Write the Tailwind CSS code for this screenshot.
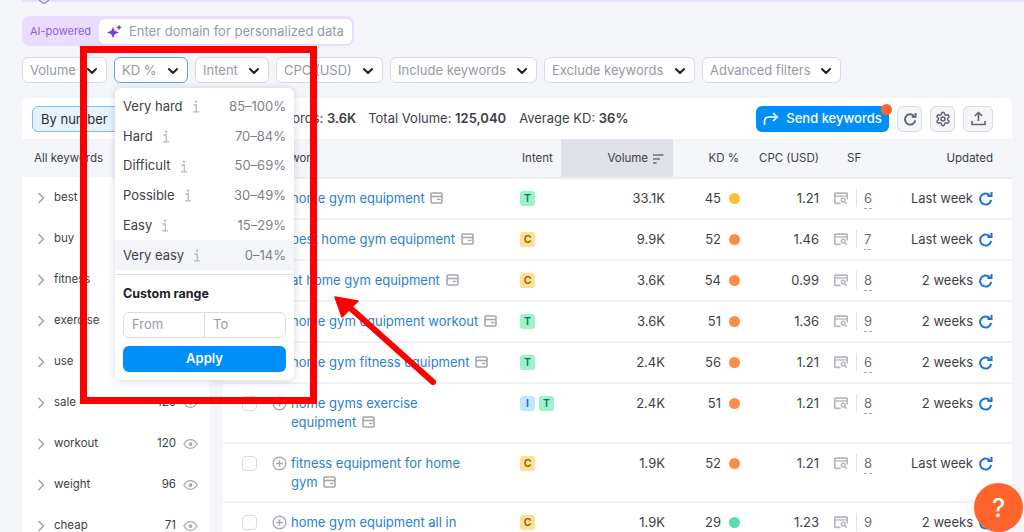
<!DOCTYPE html>
<html lang="en">
  <head>
    <meta charset="UTF-8" />
    <meta name="viewport" content="width=device-width, initial-scale=1.0" />
    <title>Keyword Magic Tool</title>
    <script src="https://cdn.jsdelivr.net/npm/@tailwindcss/browser@4"></script>
  </head>
  <body class="relative h-[532px] w-[1024px] overflow-hidden bg-[#f4f5f9] font-[Inter,sans-serif] text-[13px] text-[#3d3f47]">
    <!-- shared icons -->
    <svg class="hidden">
      <symbol id="chev" viewBox="0 0 12 12"><path d="M2 4l4 4 4-4" fill="none" stroke="currentColor" stroke-width="2" stroke-linecap="round" stroke-linejoin="round" /></symbol>
      <symbol id="chev-r" viewBox="0 0 8 12"><path d="M2 1.5L6.5 6 2 10.5" fill="none" stroke="currentColor" stroke-width="1.7" stroke-linecap="round" stroke-linejoin="round" /></symbol>
      <symbol id="eye" viewBox="0 0 16 12"><path d="M1 6c1.8-3 4-4.6 7-4.6S13.200 3 15 6c-1.800 3-4 4.600-7 4.600S2.800 9 1 6z" fill="none" stroke="currentColor" stroke-width="1.300" /><circle cx="8" cy="6" r="2" fill="currentColor" /></symbol>
      <symbol id="plus" viewBox="0 0 16 16"><circle cx="8" cy="8" r="6.800" fill="none" stroke="currentColor" stroke-width="1.400" /><path d="M8 4.500v7M4.500 8h7" stroke="currentColor" stroke-width="1.500" /></symbol>
      <symbol id="card" viewBox="0 0 13 12"><rect x="1" y="1" width="11" height="10" rx="1" fill="none" stroke="currentColor" stroke-width="1.600" /><path d="M1 4.500h11" stroke="currentColor" stroke-width="1.600" /><path d="M7 7.500h3.500" stroke="currentColor" stroke-width="1.400" /></symbol>
      <symbol id="serp" viewBox="0 0 15 13"><path d="M7 11.800H1.500a.7.7 0 0 1-.7-.7V1.500a.7.7 0 0 1 .7-.7h12a.7.7 0 0 1 .7.7v6" fill="none" stroke="currentColor" stroke-width="1.800" /><path d="M1 3.800h13" stroke="currentColor" stroke-width="1.500" /><circle cx="9.800" cy="8.200" r="2" fill="none" stroke="currentColor" stroke-width="1.500" /><path d="M11.300 9.800l2.200 2.200" stroke="currentColor" stroke-width="1.600" /></symbol>
      <symbol id="refresh" viewBox="0 0 16 16"><path d="M12.300 4.300A5.900 5.900 0 1 0 14 9.500" fill="none" stroke="currentColor" stroke-width="2.200" /><path d="M14.400 1v4.400H10" fill="none" stroke="currentColor" stroke-width="2.200" /></symbol>
      <symbol id="info" viewBox="0 0 9 13"><circle cx="5" cy="1.600" r="1.200" fill="currentColor" /><path d="M2.500 5H5.300V11.500M2 11.800H8" fill="none" stroke="currentColor" stroke-width="1.300" /></symbol>
    </svg>

    <!-- top strip -->
    <div class="ml-[22px] h-[2px] bg-[#eadffb]"></div>
    <svg class="absolute left-[38px] top-0 h-[4px] w-[12px]" viewBox="0 0 12 4" fill="none" stroke="#8d909b" stroke-width="1.200"><path d="M1 0l4 3.200 2 0L11 0" /></svg>

    <!-- AI domain field -->
    <div class="ml-[22px] mt-[14px] flex h-[30px] w-[332px] items-start rounded-lg bg-[#e9dcfd] pl-[8px] pr-[2px] pt-[3px]">
      <span class="flex h-[25px] w-[69px] items-center text-[11px] text-[#8f5ceb]">AI-powered</span>
      <div class="flex h-[25px] flex-1 items-center rounded-md bg-white pl-[8px]">
        <svg class="h-[15px] w-[15px] text-[#7c3fe4]" viewBox="0 0 15 15" fill="currentColor"><path d="M6 3L7.800 6.800 12 8.500 7.800 10.200 6 14 4.200 10.200 0 8.500 4.200 6.800z" /><path d="M12 .5l.9 2.100 2.100.9-2.100.9-.9 2.100-.9-2.100-2.100-.9 2.100-.9z" /></svg>
        <span class="ml-[7px] text-[13px] text-[#9599a6]">Enter domain for personalized data</span>
      </div>
    </div>

    <!-- filters -->
    <div class="ml-[22px] mt-[11px] flex h-[26px] gap-[7px] text-[13px] text-[#9599a6]">
      <div class="flex w-[85px] items-center justify-between rounded-md border border-[#d9dbe3] bg-white pl-[7px] pr-[8px] pt-[2px]">Volume<svg class="h-[12px] w-[12px] text-[#1f2127]"><use href="#chev" /></svg></div>
      <div class="flex w-[74px] items-center justify-between rounded-md border border-[#5ba4e6] bg-white pl-[7px] pr-[8px] pt-[2px]">KD %<svg class="h-[12px] w-[12px] text-[#1f2127]"><use href="#chev" /></svg></div>
      <div class="flex w-[74px] items-center justify-between rounded-md border border-[#d9dbe3] bg-white pl-[7px] pr-[8px] pt-[2px]">Intent<svg class="h-[12px] w-[12px] text-[#1f2127]"><use href="#chev" /></svg></div>
      <div class="flex w-[107px] items-center justify-between rounded-md border border-[#d9dbe3] bg-white pl-[7px] pr-[8px] pt-[2px]">CPC (USD)<svg class="h-[12px] w-[12px] text-[#1f2127]"><use href="#chev" /></svg></div>
      <div class="flex w-[147px] items-center justify-between rounded-md border border-[#d9dbe3] bg-white pl-[7px] pr-[8px] pt-[2px]">Include keywords<svg class="h-[12px] w-[12px] text-[#1f2127]"><use href="#chev" /></svg></div>
      <div class="flex w-[151px] items-center justify-between rounded-md border border-[#d9dbe3] bg-white pl-[7px] pr-[8px] pt-[2px]">Exclude keywords<svg class="h-[12px] w-[12px] text-[#1f2127]"><use href="#chev" /></svg></div>
      <div class="flex w-[139px] items-center justify-between rounded-md border border-[#d9dbe3] bg-white pl-[7px] pr-[8px] pt-[2px]">Advanced filters<svg class="h-[12px] w-[12px] text-[#1f2127]"><use href="#chev" /></svg></div>
    </div>

    <!-- toolbar -->
    <div class="ml-[22px] mt-[15px] flex h-[41px] w-[990px] items-center rounded-t-lg bg-white pl-[10px] pr-[19px]">
      <div class="flex h-[26px] w-[98px] items-center rounded-md border border-[#7dbcf0] bg-[#e4f3fd] pl-[8px] pt-[2px] text-[#2a2c33]">By number</div>
      <div class="ml-[129px] whitespace-nowrap">Keywords: <b class="font-semibold">3.6K</b></div>
      <div class="ml-[12px] whitespace-nowrap">Total Volume: <b class="font-semibold">125,040</b></div>
      <div class="ml-[13px] whitespace-nowrap">Average KD: <b class="font-semibold">36%</b></div>
      <div class="relative ml-auto flex h-[26px] w-[133px] items-center justify-center gap-[7px] rounded-md bg-[#008ff8] font-medium text-white">
        <svg class="h-[15px] w-[16px]" viewBox="0 0 16 15" fill="none" stroke="currentColor" stroke-width="1.700"><path d="M1.500 14V10.500C1.500 7.500 3.500 6 6 6H14" /><path d="M10 2l4.300 4-4.300 4" /></svg>
        Send keywords
        <span class="absolute -right-[3px] -top-[2px] h-[11px] w-[11px] rounded-full bg-[#ff642d]"></span>
      </div>
      <div class="ml-[8px] flex h-[26px] w-[25px] items-center justify-center rounded-md border border-[#d9dbe3] bg-[#f4f5f9] text-[#5f636e]"><svg class="h-[14px] w-[14px]"><use href="#refresh" /></svg></div>
      <div class="ml-[8px] flex h-[26px] w-[25px] items-center justify-center rounded-md border border-[#d9dbe3] bg-[#f4f5f9] text-[#5f636e]">
        <svg class="h-[16px] w-[16px]" viewBox="0 0 24 24" fill="none" stroke="currentColor" stroke-width="2.200"><path d="M12.220 2h-.44a2 2 0 0 0-2 2v.18a2 2 0 0 1-1 1.730l-.43.25a2 2 0 0 1-2 0l-.15-.08a2 2 0 0 0-2.730.73l-.22.38a2 2 0 0 0 .73 2.730l.15.1a2 2 0 0 1 1 1.720v.51a2 2 0 0 1-1 1.740l-.15.09a2 2 0 0 0-.73 2.730l.22.38a2 2 0 0 0 2.730.73l.15-.08a2 2 0 0 1 2 0l.43.25a2 2 0 0 1 1 1.730V20a2 2 0 0 0 2 2h.44a2 2 0 0 0 2-2v-.18a2 2 0 0 1 1-1.730l.43-.25a2 2 0 0 1 2 0l.15.08a2 2 0 0 0 2.730-.73l.22-.39a2 2 0 0 0-.73-2.730l-.15-.08a2 2 0 0 1-1-1.740v-.5a2 2 0 0 1 1-1.740l.15-.09a2 2 0 0 0 .73-2.730l-.22-.38a2 2 0 0 0-2.730-.73l-.15.08a2 2 0 0 1-2 0l-.43-.25a2 2 0 0 1-1-1.730V4a2 2 0 0 0-2-2z" /><circle cx="12" cy="12" r="3" /></svg>
      </div>
      <div class="ml-[8px] flex h-[26px] w-[30px] items-center justify-center rounded-md border border-[#d9dbe3] bg-[#f4f5f9] text-[#5f636e]">
        <svg class="h-[15px] w-[15px]" viewBox="0 0 15 15" fill="none" stroke="currentColor" stroke-width="1.600"><path d="M7.500 10V1.500M3.800 5l3.700-3.500L11.200 5M1 10v3.500h13V10" /></svg>
      </div>
    </div>

    <div class="ml-[22px] flex w-[990px] gap-[14px]">
      <!-- sidebar -->
      <aside class="h-[400px] w-[187px] bg-white text-[11.500px]">
        <div class="flex h-[38px] items-center bg-[#f4f5f9] pl-[12px] pt-[2px] text-[#3d3f47]">All keywords</div>
        <div class="flex h-[41px] items-center pl-[15px] pr-[11px]"><svg class="h-[12px] w-[8px] text-[#a4a7b3]"><use href="#chev-r" /></svg><span class="ml-[9px] flex-1">best</span></div>
        <div class="flex h-[41px] items-center pl-[15px] pr-[11px]"><svg class="h-[12px] w-[8px] text-[#a4a7b3]"><use href="#chev-r" /></svg><span class="ml-[9px] flex-1">buy</span></div>
        <div class="flex h-[41px] items-center pl-[15px] pr-[11px]"><svg class="h-[12px] w-[8px] text-[#a4a7b3]"><use href="#chev-r" /></svg><span class="ml-[9px] flex-1">fitness</span></div>
        <div class="flex h-[41px] items-center pl-[15px] pr-[11px]"><svg class="h-[12px] w-[8px] text-[#a4a7b3]"><use href="#chev-r" /></svg><span class="ml-[9px] flex-1">exercise</span></div>
        <div class="flex h-[41px] items-center pl-[15px] pr-[11px]"><svg class="h-[12px] w-[8px] text-[#a4a7b3]"><use href="#chev-r" /></svg><span class="ml-[9px] flex-1">use</span></div>
        <div class="flex h-[41px] items-center pl-[15px] pr-[11px]"><svg class="h-[12px] w-[8px] text-[#a4a7b3]"><use href="#chev-r" /></svg><span class="ml-[9px] flex-1">sale</span><span>120</span><svg class="ml-[7px] h-[12px] w-[15px] text-[#a4a7b3]"><use href="#eye" /></svg></div>
        <div class="flex h-[41px] items-center pl-[15px] pr-[11px]"><svg class="h-[12px] w-[8px] text-[#a4a7b3]"><use href="#chev-r" /></svg><span class="ml-[9px] flex-1">workout</span><span>120</span><svg class="ml-[7px] h-[12px] w-[15px] text-[#a4a7b3]"><use href="#eye" /></svg></div>
        <div class="flex h-[41px] items-center pl-[15px] pr-[11px]"><svg class="h-[12px] w-[8px] text-[#a4a7b3]"><use href="#chev-r" /></svg><span class="ml-[9px] flex-1">weight</span><span>96</span><svg class="ml-[7px] h-[12px] w-[15px] text-[#a4a7b3]"><use href="#eye" /></svg></div>
        <div class="flex h-[41px] items-center pl-[15px] pr-[11px]"><svg class="h-[12px] w-[8px] text-[#a4a7b3]"><use href="#chev-r" /></svg><span class="ml-[9px] flex-1">cheap</span><span>71</span><svg class="ml-[7px] h-[12px] w-[15px] text-[#a4a7b3]"><use href="#eye" /></svg></div>
      </aside>

      <!-- table -->
      <main class="w-[789px] bg-white">
        <div class="grid h-[40px] grid-cols-[297px_41px_112px_69px_81px_57px_1fr] items-stretch border-b-2 border-[#eceef3] bg-[#f4f5f9] text-[11.500px]">
          <div class="flex items-center pl-[47px] pt-[2px]">Keyword</div>
          <div class="ml-[2px] flex items-center pt-[2px]">Intent</div>
          <div class="flex items-center justify-end gap-[4px] bg-[#e0e1e9] pr-[9px] pt-[2px]">Volume<svg class="h-[10px] w-[12px]" viewBox="0 0 12 10" stroke="#6b6e79" stroke-width="1.500"><path d="M1 1h10.500M1 5h7M1 9h3.500" /></svg></div>
          <div class="flex items-center justify-end pr-[3px] pt-[2px]">KD %</div>
          <div class="flex items-center justify-end pr-[4px] pt-[2px]">CPC (USD)</div>
          <div class="flex items-center pl-[24px] pt-[2px]">SF</div>
          <div class="flex items-center justify-end pr-[19px] pt-[2px]">Updated</div>
        </div>

        <div class="grid h-[41px] grid-cols-[297px_41px_112px_69px_81px_57px_1fr] items-start border-b-2 border-[#f0f1f5] pt-[10px] leading-[19px]">
          <div class="flex"><span class="ml-[19px] mt-[2px] h-[15px] w-[15px] rounded-[4px] border border-[#d9dbe3]"></span><svg class="ml-[15px] mt-[2px] h-[15px] w-[15px] text-[#a4a7b3]"><use href="#plus" /></svg><span class="ml-[4px] text-[#2b80d3]">home gym equipment <svg class="ml-[2px] inline h-[12px] w-[13px] align-[-1px] text-[#a4a7b3]"><use href="#card" /></svg></span></div>
          <div class="flex gap-[4px] pt-[2px]"><span class="flex h-[15px] w-[15px] items-center justify-center rounded-[3px] bg-[#9ef2c9] text-[10.500px] font-semibold text-[#007c65]">T</span></div>
          <div class="pr-[8px] text-right">33.1K</div>
          <div class="flex items-center justify-end gap-[8px] pr-[2px]">45<span class="h-[11px] w-[11px] rounded-full bg-[#fcbf30]"></span></div>
          <div class="pr-[4px] text-right">1.21</div>
          <div class="flex items-start pl-[11px]"><svg class="mt-[3px] h-[13px] w-[14px] text-[#b4b7c1]"><use href="#serp" /></svg><span class="ml-[8px] h-[18px] w-px bg-[#e0e1e9]"></span><span class="ml-[7px] border-b border-dashed border-[#a4a7b3] text-[#6b6e79]">6</span></div>
          <div class="flex items-start justify-end gap-[5px] pr-[19px]">Last week<svg class="mt-[2px] h-[15px] w-[15px] text-[#1a76d2]"><use href="#refresh" /></svg></div>
        </div>

        <div class="grid h-[41px] grid-cols-[297px_41px_112px_69px_81px_57px_1fr] items-start border-b-2 border-[#f0f1f5] pt-[10px] leading-[19px]">
          <div class="flex"><span class="ml-[19px] mt-[2px] h-[15px] w-[15px] rounded-[4px] border border-[#d9dbe3]"></span><svg class="ml-[15px] mt-[2px] h-[15px] w-[15px] text-[#a4a7b3]"><use href="#plus" /></svg><span class="ml-[4px] text-[#2b80d3]">best home gym equipment <svg class="ml-[2px] inline h-[12px] w-[13px] align-[-1px] text-[#a4a7b3]"><use href="#card" /></svg></span></div>
          <div class="flex gap-[4px] pt-[2px]"><span class="flex h-[15px] w-[15px] items-center justify-center rounded-[3px] bg-[#fde08f] text-[10.500px] font-semibold text-[#8c5a10]">C</span></div>
          <div class="pr-[8px] text-right">9.9K</div>
          <div class="flex items-center justify-end gap-[8px] pr-[2px]">52<span class="h-[11px] w-[11px] rounded-full bg-[#ff8c43]"></span></div>
          <div class="pr-[4px] text-right">1.46</div>
          <div class="flex items-start pl-[11px]"><svg class="mt-[3px] h-[13px] w-[14px] text-[#b4b7c1]"><use href="#serp" /></svg><span class="ml-[8px] h-[18px] w-px bg-[#e0e1e9]"></span><span class="ml-[7px] border-b border-dashed border-[#a4a7b3] text-[#6b6e79]">7</span></div>
          <div class="flex items-start justify-end gap-[5px] pr-[19px]">Last week<svg class="mt-[2px] h-[15px] w-[15px] text-[#1a76d2]"><use href="#refresh" /></svg></div>
        </div>

        <div class="grid h-[41px] grid-cols-[297px_41px_112px_69px_81px_57px_1fr] items-start border-b-2 border-[#f0f1f5] pt-[10px] leading-[19px]">
          <div class="flex"><span class="ml-[19px] mt-[2px] h-[15px] w-[15px] rounded-[4px] border border-[#d9dbe3]"></span><svg class="ml-[15px] mt-[2px] h-[15px] w-[15px] text-[#a4a7b3]"><use href="#plus" /></svg><span class="ml-[4px] text-[#2b80d3]">at home gym equipment <svg class="ml-[2px] inline h-[12px] w-[13px] align-[-1px] text-[#a4a7b3]"><use href="#card" /></svg></span></div>
          <div class="flex gap-[4px] pt-[2px]"><span class="flex h-[15px] w-[15px] items-center justify-center rounded-[3px] bg-[#fde08f] text-[10.500px] font-semibold text-[#8c5a10]">C</span></div>
          <div class="pr-[8px] text-right">3.6K</div>
          <div class="flex items-center justify-end gap-[8px] pr-[2px]">54<span class="h-[11px] w-[11px] rounded-full bg-[#ff8c43]"></span></div>
          <div class="pr-[4px] text-right">0.99</div>
          <div class="flex items-start pl-[11px]"><svg class="mt-[3px] h-[13px] w-[14px] text-[#b4b7c1]"><use href="#serp" /></svg><span class="ml-[8px] h-[18px] w-px bg-[#e0e1e9]"></span><span class="ml-[7px] border-b border-dashed border-[#a4a7b3] text-[#6b6e79]">8</span></div>
          <div class="flex items-start justify-end gap-[5px] pr-[19px]">2 weeks<svg class="mt-[2px] h-[15px] w-[15px] text-[#1a76d2]"><use href="#refresh" /></svg></div>
        </div>

        <div class="grid h-[41px] grid-cols-[297px_41px_112px_69px_81px_57px_1fr] items-start border-b-2 border-[#f0f1f5] pt-[10px] leading-[19px]">
          <div class="flex"><span class="ml-[19px] mt-[2px] h-[15px] w-[15px] rounded-[4px] border border-[#d9dbe3]"></span><svg class="ml-[15px] mt-[2px] h-[15px] w-[15px] text-[#a4a7b3]"><use href="#plus" /></svg><span class="ml-[4px] whitespace-nowrap text-[#2b80d3]">home gym equipment workout <svg class="ml-[2px] inline h-[12px] w-[13px] align-[-1px] text-[#a4a7b3]"><use href="#card" /></svg></span></div>
          <div class="flex gap-[4px] pt-[2px]"><span class="flex h-[15px] w-[15px] items-center justify-center rounded-[3px] bg-[#9ef2c9] text-[10.500px] font-semibold text-[#007c65]">T</span></div>
          <div class="pr-[8px] text-right">3.6K</div>
          <div class="flex items-center justify-end gap-[8px] pr-[2px]">51<span class="h-[11px] w-[11px] rounded-full bg-[#ff8c43]"></span></div>
          <div class="pr-[4px] text-right">1.36</div>
          <div class="flex items-start pl-[11px]"><svg class="mt-[3px] h-[13px] w-[14px] text-[#b4b7c1]"><use href="#serp" /></svg><span class="ml-[8px] h-[18px] w-px bg-[#e0e1e9]"></span><span class="ml-[7px] border-b border-dashed border-[#a4a7b3] text-[#6b6e79]">9</span></div>
          <div class="flex items-start justify-end gap-[5px] pr-[19px]">2 weeks<svg class="mt-[2px] h-[15px] w-[15px] text-[#1a76d2]"><use href="#refresh" /></svg></div>
        </div>

        <div class="grid h-[41px] grid-cols-[297px_41px_112px_69px_81px_57px_1fr] items-start border-b-2 border-[#f0f1f5] pt-[10px] leading-[19px]">
          <div class="flex"><span class="ml-[19px] mt-[2px] h-[15px] w-[15px] rounded-[4px] border border-[#d9dbe3]"></span><svg class="ml-[15px] mt-[2px] h-[15px] w-[15px] text-[#a4a7b3]"><use href="#plus" /></svg><span class="ml-[4px] text-[#2b80d3]">home gym fitness equipment <svg class="ml-[2px] inline h-[12px] w-[13px] align-[-1px] text-[#a4a7b3]"><use href="#card" /></svg></span></div>
          <div class="flex gap-[4px] pt-[2px]"><span class="flex h-[15px] w-[15px] items-center justify-center rounded-[3px] bg-[#9ef2c9] text-[10.500px] font-semibold text-[#007c65]">T</span></div>
          <div class="pr-[8px] text-right">2.4K</div>
          <div class="flex items-center justify-end gap-[8px] pr-[2px]">56<span class="h-[11px] w-[11px] rounded-full bg-[#ff8c43]"></span></div>
          <div class="pr-[4px] text-right">1.21</div>
          <div class="flex items-start pl-[11px]"><svg class="mt-[3px] h-[13px] w-[14px] text-[#b4b7c1]"><use href="#serp" /></svg><span class="ml-[8px] h-[18px] w-px bg-[#e0e1e9]"></span><span class="ml-[7px] border-b border-dashed border-[#a4a7b3] text-[#6b6e79]">6</span></div>
          <div class="flex items-start justify-end gap-[5px] pr-[19px]">2 weeks<svg class="mt-[2px] h-[15px] w-[15px] text-[#1a76d2]"><use href="#refresh" /></svg></div>
        </div>

        <div class="grid h-[60px] grid-cols-[297px_41px_112px_69px_81px_57px_1fr] items-start border-b-2 border-[#f0f1f5] pt-[10px] leading-[19px]">
          <div class="flex"><span class="ml-[19px] mt-[2px] h-[15px] w-[15px] rounded-[4px] border border-[#d9dbe3]"></span><svg class="ml-[15px] mt-[2px] h-[15px] w-[15px] text-[#a4a7b3]"><use href="#plus" /></svg><span class="ml-[4px] text-[#2b80d3]">home gyms exercise<br />equipment <svg class="ml-[2px] inline h-[12px] w-[13px] align-[-1px] text-[#a4a7b3]"><use href="#card" /></svg></span></div>
          <div class="flex gap-[4px] pt-[2px]"><span class="flex h-[15px] w-[15px] items-center justify-center rounded-[3px] bg-[#c4e5fe] text-[10.500px] font-semibold text-[#006dca]">I</span><span class="flex h-[15px] w-[15px] items-center justify-center rounded-[3px] bg-[#9ef2c9] text-[10.500px] font-semibold text-[#007c65]">T</span></div>
          <div class="pr-[8px] text-right">2.4K</div>
          <div class="flex items-center justify-end gap-[8px] pr-[2px]">51<span class="h-[11px] w-[11px] rounded-full bg-[#ff8c43]"></span></div>
          <div class="pr-[4px] text-right">1.21</div>
          <div class="flex items-start pl-[11px]"><svg class="mt-[3px] h-[13px] w-[14px] text-[#b4b7c1]"><use href="#serp" /></svg><span class="ml-[8px] h-[18px] w-px bg-[#e0e1e9]"></span><span class="ml-[7px] border-b border-dashed border-[#a4a7b3] text-[#6b6e79]">8</span></div>
          <div class="flex items-start justify-end gap-[5px] pr-[19px]">2 weeks<svg class="mt-[2px] h-[15px] w-[15px] text-[#1a76d2]"><use href="#refresh" /></svg></div>
        </div>

        <div class="grid h-[59px] grid-cols-[297px_41px_112px_69px_81px_57px_1fr] items-start border-b-2 border-[#f0f1f5] pt-[10px] leading-[19px]">
          <div class="flex"><span class="ml-[19px] mt-[2px] h-[15px] w-[15px] rounded-[4px] border border-[#d9dbe3]"></span><svg class="ml-[15px] mt-[2px] h-[15px] w-[15px] text-[#a4a7b3]"><use href="#plus" /></svg><span class="ml-[4px] text-[#2b80d3]">fitness equipment for home<br />gym <svg class="ml-[2px] inline h-[12px] w-[13px] align-[-1px] text-[#a4a7b3]"><use href="#card" /></svg></span></div>
          <div class="flex gap-[4px] pt-[2px]"><span class="flex h-[15px] w-[15px] items-center justify-center rounded-[3px] bg-[#fde08f] text-[10.500px] font-semibold text-[#8c5a10]">C</span></div>
          <div class="pr-[8px] text-right">1.9K</div>
          <div class="flex items-center justify-end gap-[8px] pr-[2px]">52<span class="h-[11px] w-[11px] rounded-full bg-[#ff8c43]"></span></div>
          <div class="pr-[4px] text-right">1.21</div>
          <div class="flex items-start pl-[11px]"><svg class="mt-[3px] h-[13px] w-[14px] text-[#b4b7c1]"><use href="#serp" /></svg><span class="ml-[8px] h-[18px] w-px bg-[#e0e1e9]"></span><span class="ml-[7px] border-b border-dashed border-[#a4a7b3] text-[#6b6e79]">8</span></div>
          <div class="flex items-start justify-end gap-[5px] pr-[19px]">Last week<svg class="mt-[2px] h-[15px] w-[15px] text-[#1a76d2]"><use href="#refresh" /></svg></div>
        </div>

        <div class="grid h-[41px] grid-cols-[297px_41px_112px_69px_81px_57px_1fr] items-start pt-[10px] leading-[19px]">
          <div class="flex"><span class="ml-[19px] mt-[2px] h-[15px] w-[15px] rounded-[4px] border border-[#d9dbe3]"></span><svg class="ml-[15px] mt-[2px] h-[15px] w-[15px] text-[#a4a7b3]"><use href="#plus" /></svg><span class="ml-[4px] text-[#2b80d3]">home gym equipment all in</span></div>
          <div class="flex gap-[4px] pt-[2px]"><span class="flex h-[15px] w-[15px] items-center justify-center rounded-[3px] bg-[#fde08f] text-[10.500px] font-semibold text-[#8c5a10]">C</span></div>
          <div class="pr-[8px] text-right">1.9K</div>
          <div class="flex items-center justify-end gap-[8px] pr-[2px]">29<span class="h-[11px] w-[11px] rounded-full bg-[#59ddaa]"></span></div>
          <div class="pr-[4px] text-right">1.23</div>
          <div class="flex items-start pl-[11px]"><svg class="mt-[3px] h-[13px] w-[14px] text-[#b4b7c1]"><use href="#serp" /></svg><span class="ml-[8px] h-[18px] w-px bg-[#e0e1e9]"></span><span class="ml-[7px] text-[#6b6e79]">9</span></div>
          <div class="flex items-start justify-end gap-[5px] pr-[19px]">2 weeks<svg class="mt-[2px] h-[15px] w-[15px] text-[#1a76d2]"><use href="#refresh" /></svg></div>
        </div>
      </main>
    </div>

    <!-- KD % dropdown -->
    <div class="absolute left-[115px] top-[88px] h-[292px] w-[179px] rounded-md bg-white pt-[4px] shadow-[0_1px_8px_rgba(40,45,70,0.18)]">
      <div class="flex h-[29.700px] items-center justify-between px-[8px]"><span class="flex items-center gap-[8px]">Very hard<svg class="h-[13px] w-[9px] text-[#b4b7c1]"><use href="#info" /></svg></span><span class="text-[#7c7f8a]">85–100%</span></div>
      <div class="flex h-[29.700px] items-center justify-between px-[8px]"><span class="flex items-center gap-[8px]">Hard<svg class="h-[13px] w-[9px] text-[#b4b7c1]"><use href="#info" /></svg></span><span class="text-[#7c7f8a]">70–84%</span></div>
      <div class="flex h-[29.700px] items-center justify-between px-[8px]"><span class="flex items-center gap-[8px]">Difficult<svg class="h-[13px] w-[9px] text-[#b4b7c1]"><use href="#info" /></svg></span><span class="text-[#7c7f8a]">50–69%</span></div>
      <div class="flex h-[29.700px] items-center justify-between px-[8px]"><span class="flex items-center gap-[8px]">Possible<svg class="h-[13px] w-[9px] text-[#b4b7c1]"><use href="#info" /></svg></span><span class="text-[#7c7f8a]">30–49%</span></div>
      <div class="flex h-[29.700px] items-center justify-between px-[8px]"><span class="flex items-center gap-[8px]">Easy<svg class="h-[13px] w-[9px] text-[#b4b7c1]"><use href="#info" /></svg></span><span class="text-[#7c7f8a]">15–29%</span></div>
      <div class="flex h-[29.700px] items-center justify-between bg-[#f4f5f9] px-[8px]"><span class="flex items-center gap-[8px]">Very easy<svg class="h-[13px] w-[9px] text-[#b4b7c1]"><use href="#info" /></svg></span><span class="text-[#7c7f8a]">0–14%</span></div>
      <div class="mt-[4px] border-t border-[#e0e1e9] px-[8px] pt-[10px]">
        <div class="text-[12.500px] font-bold leading-[17px] text-[#1f2127]">Custom range</div>
        <div class="mt-[10px] flex h-[26px] rounded-md border border-[#d9dbe3] text-[#9599a6]">
          <span class="flex w-[81px] items-center border-r border-[#d9dbe3] pl-[8px]">From</span>
          <span class="flex items-center pl-[8px]">To</span>
        </div>
        <div class="mt-[8px] flex h-[26px] items-center justify-center rounded-md bg-[#008ff8] font-semibold text-white">Apply</div>
      </div>
    </div>

    <!-- annotation drawn over the screenshot -->
    <div class="absolute left-[80px] top-[46px] h-[358px] w-[237px] border-[7px] border-[#ff0000]"></div>
    <svg class="absolute left-[325px] top-[290px] h-[100px] w-[120px]" viewBox="0 0 120 100">
      <path d="M108 92L22 15" stroke="#ff0000" stroke-width="6" stroke-linecap="round" />
      <path d="M10 7L33 11L17 27z" fill="#ff0000" stroke="#ff0000" stroke-width="1.500" stroke-linejoin="round" />
    </svg>

    <!-- help -->
    <div class="absolute left-[974px] top-[483px] flex h-[49px] w-[49px] items-center justify-center rounded-full bg-[#ff642d] pt-[2px] text-[25px] font-medium text-white">?</div>
  </body>
</html>
